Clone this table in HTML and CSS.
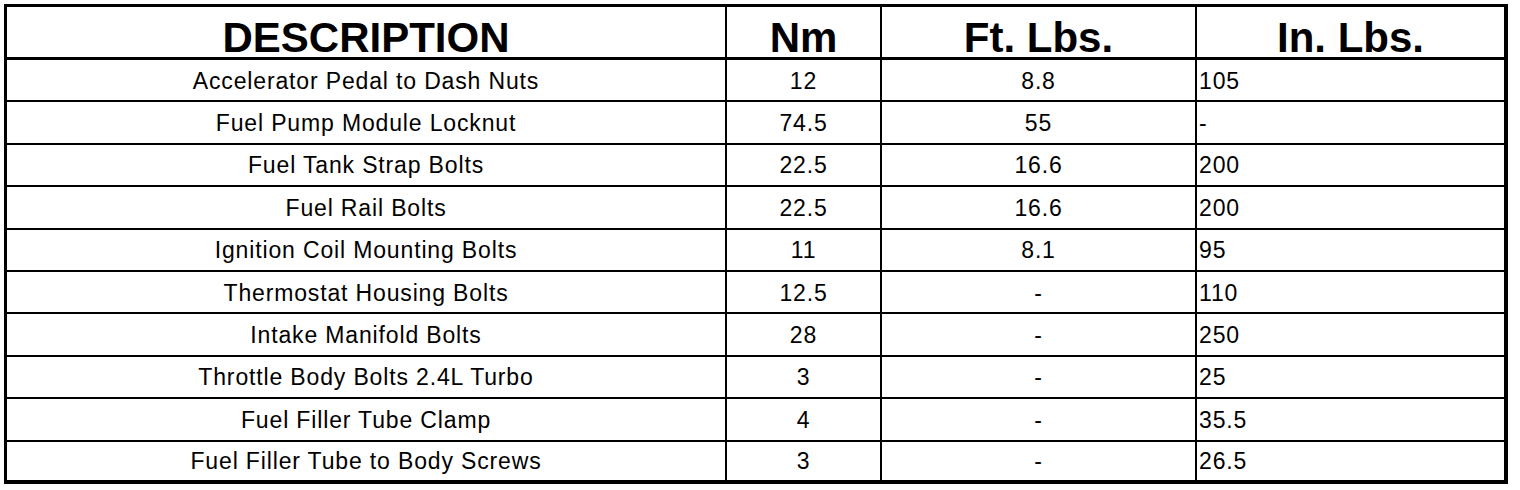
FILE: index.html
```html
<!DOCTYPE html>
<html>
<head>
<meta charset="utf-8">
<link rel="stylesheet" href="styles.css">
</head>
<body>
<div class="torque">
  <div class="cell head">DESCRIPTION</div>
  <div class="cell head col">Nm</div>
  <div class="cell head col">Ft. Lbs.</div>
  <div class="cell head col">In. Lbs.</div>

  <div class="cell desc">Accelerator Pedal to Dash Nuts</div>
  <div class="cell num col">12</div>
  <div class="cell num col">8.8</div>
  <div class="cell left col">105</div>

  <div class="cell desc">Fuel Pump Module Locknut</div>
  <div class="cell num col">74.5</div>
  <div class="cell num col">55</div>
  <div class="cell left col">-</div>

  <div class="cell desc">Fuel Tank Strap Bolts</div>
  <div class="cell num col">22.5</div>
  <div class="cell num col">16.6</div>
  <div class="cell left col">200</div>

  <div class="cell desc">Fuel Rail Bolts</div>
  <div class="cell num col">22.5</div>
  <div class="cell num col">16.6</div>
  <div class="cell left col">200</div>

  <div class="cell desc">Ignition Coil Mounting Bolts</div>
  <div class="cell num col">11</div>
  <div class="cell num col">8.1</div>
  <div class="cell left col">95</div>

  <div class="cell desc">Thermostat Housing Bolts</div>
  <div class="cell num col">12.5</div>
  <div class="cell num col">-</div>
  <div class="cell left col">110</div>

  <div class="cell desc">Intake Manifold Bolts</div>
  <div class="cell num col">28</div>
  <div class="cell num col">-</div>
  <div class="cell left col">250</div>

  <div class="cell desc">Throttle Body Bolts 2.4L Turbo</div>
  <div class="cell num col">3</div>
  <div class="cell num col">-</div>
  <div class="cell left col">25</div>

  <div class="cell desc">Fuel Filler Tube Clamp</div>
  <div class="cell num col">4</div>
  <div class="cell num col">-</div>
  <div class="cell left col">35.5</div>

  <div class="cell desc last">Fuel Filler Tube to Body Screws</div>
  <div class="cell num col last">3</div>
  <div class="cell num col last">-</div>
  <div class="cell left col last">26.5</div>
</div>
</body>
</html>
```

FILE: styles.css
```css
html, body {
  margin: 0;
  padding: 0;
  background: #fff;
}

body {
  font-family: "Liberation Sans", Arial, Helvetica, sans-serif;
  color: #000;
}

.torque {
  margin: 4px 0 0 4px;
  width: 1497px;
  border-style: solid;
  border-color: #000;
  border-width: 3px 4px 4px 3px;
  display: grid;
  grid-template-columns: 718px 155px 315px 309px;
  grid-template-rows: 53px repeat(9, 42.4px) 38.4px;
}

.cell {
  display: flex;
  align-items: center;
  border-bottom: 2px solid #000;
  box-sizing: border-box;
  font-size: 23px;
  letter-spacing: 0.85px;
  white-space: nowrap;
  overflow: hidden;
}

.cell.col {
  border-left: 2px solid #000;
}

.cell.last {
  border-bottom: none;
}

.head {
  justify-content: center;
  font-weight: bold;
  font-size: 42px;
  letter-spacing: 0;
  border-bottom-width: 3px;
  padding-top: 12px;
}

.desc,
.num {
  justify-content: center;
  padding-top: 2px;
}

.left {
  justify-content: flex-start;
  padding-left: 2px;
  padding-top: 2px;
}
```
